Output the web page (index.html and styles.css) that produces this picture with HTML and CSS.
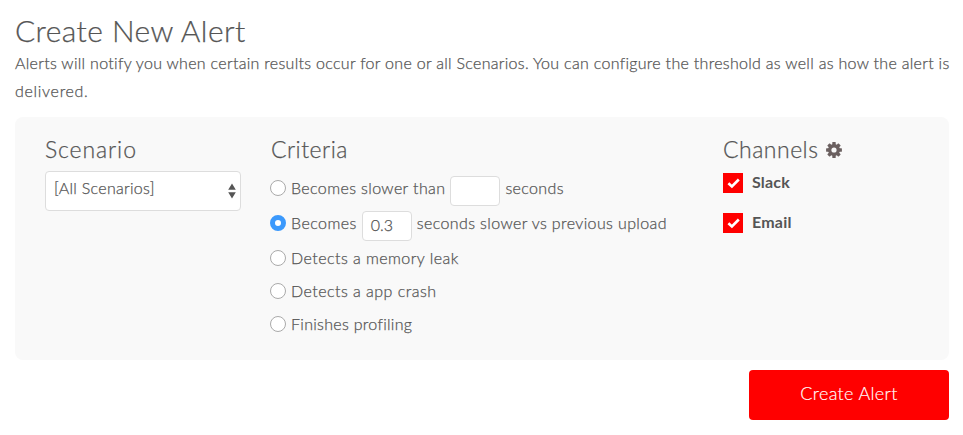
FILE: index.html
```html
<!DOCTYPE html>
<html lang="en">
<head>
<meta charset="utf-8">
<title>Create New Alert</title>
<link rel="stylesheet" href="styles.css">
</head>
<body>
<main class="page">
  <h1 class="title"><span>Create New Alert</span></h1>
  <p class="intro"><span class="intro-first">Alerts will notify you when certain results occur for one or all Scenarios. You can configure the threshold as well as how the alert is</span><br><span class="intro-last">delivered.</span></p>
  <form class="panel">
    <section class="scenario">
      <h2><span class="t-scenario">Scenario</span></h2>
      <div class="select"><span class="select-text">[All Scenarios]</span>
        <svg class="arrows" width="8" height="16" viewBox="0 0 8 16"><path d="M4 .5 7.8 6.7H.2zM4 15.5.2 9.3h7.6z" fill="#555"/></svg>
      </div>
    </section>
    <section class="criteria">
      <h2><span>Criteria</span></h2>
      <div class="option field"><i class="radio"></i><span class="t-slower">Becomes slower than</span><b class="input"></b><span class="t-seconds">seconds</span></div>
      <div class="option field"><i class="radio on"></i><span class="t-becomes">Becomes</span><b class="input">0.3</b><span class="t-upload">seconds slower vs previous upload</span></div>
      <div class="option"><i class="radio"></i><span class="t-leak">Detects a memory leak</span></div>
      <div class="option"><i class="radio"></i><span class="t-crash">Detects a app crash</span></div>
      <div class="option"><i class="radio"></i><span class="t-finish">Finishes profiling</span></div>
    </section>
    <section class="channels">
      <h2><span>Channels</span>
        <svg class="gear" width="16" height="16" viewBox="-8 -8 16 16"><g fill="#6b6060"><rect x="-1.7" y="-7.9" width="3.4" height="15.8" rx=".5"/><rect x="-1.7" y="-7.9" width="3.4" height="15.8" rx=".5" transform="rotate(45)"/><rect x="-1.7" y="-7.9" width="3.4" height="15.8" rx=".5" transform="rotate(90)"/><rect x="-1.7" y="-7.9" width="3.4" height="15.8" rx=".5" transform="rotate(135)"/><circle r="6"/></g><circle r="2.6" fill="#f9f9f9"/></svg>
      </h2>
      <div class="channel"><svg class="check" width="20" height="20" viewBox="0 0 20 20"><path d="M5.4 10.2 8.9 13.4 15.8 6.5" fill="none" stroke="#fff" stroke-width="2.6"/></svg><span class="t-slack">Slack</span></div>
      <div class="channel"><svg class="check" width="20" height="20" viewBox="0 0 20 20"><path d="M5.4 10.2 8.9 13.4 15.8 6.5" fill="none" stroke="#fff" stroke-width="2.6"/></svg><span class="t-email">Email</span></div>
    </section>
  </form>
  <button class="submit" type="button"><span>Create Alert</span></button>
</main>
</body>
</html>
```
FILE: styles.css
```css
* { box-sizing: border-box; }
body { margin: 0; background: #fff; color: #555; font: 300 16px/28px Lato, "Open Sans", sans-serif; -webkit-text-stroke: .25px currentColor; }
.page { display: flex; flex-direction: column; padding: 12px 14px 0 15px; white-space: nowrap; }
h1, h2, p { margin: 0; font-weight: 300; }
.title { height: 37px; font-size: 30px; line-height: 36px; letter-spacing: .43px; }
.intro { height: 68px; }
.intro-first { letter-spacing: .3px; }
.intro-last { letter-spacing: .7px; }
.panel { display: grid; grid-template-columns: 226px 452px 1fr; height: 243px; padding: 20px 30px 0; border-radius: 8px; background: #f9f9f9; }
h2 { display: flex; align-items: center; height: 26px; font-size: 23px; line-height: 26px; letter-spacing: .5px; }
h2 span { padding-bottom: 2px; }
.t-scenario { letter-spacing: .9px; }
.select { display: flex; justify-content: space-between; width: 196px; height: 40px; margin-top: 8px; padding: 2px 4px 0 8px; border: 1px solid #ddd; border-radius: 4px; background: #fff; }
.select-text { letter-spacing: .3px; }
.arrows { margin-top: 9px; }
.option { display: flex; align-items: center; height: 33px; margin-left: -1px; }
.option.field { height: 35px; }
.field { padding-bottom: 1px; }
h2 + .field { margin-top: 8px; }
.radio { flex: none; width: 16px; height: 16px; margin-right: 5px; border: 1px solid #aaa; border-radius: 50%; background: #fff; }
.radio.on { border: 5px solid #3b99fc; }
.t-slower, .t-seconds, .t-upload { letter-spacing: .38px; }
.t-becomes { letter-spacing: .45px; }
.t-leak { letter-spacing: .45px; }
.t-crash { letter-spacing: .47px; }
.t-finish { letter-spacing: .3px; }
.input { width: 50px; height: 30px; margin: 6px 5px 0; padding-left: 8px; border: 1px solid #ddd; border-radius: 4px; background: #fff; font-weight: 300; line-height: 26px; }
.gear { margin-left: 8px; }
.channel { display: flex; height: 20px; margin: 10px 0 20px; line-height: 17px; font-weight: 700; -webkit-text-stroke: 0; }
.check { margin-right: 9px; background: #f00; }
.t-slack, .t-email { letter-spacing: .2px; }
.submit { align-self: flex-end; width: 200px; height: 50px; margin-top: 10px; padding: 0 0 4px; border: 0; border-radius: 4px; background: #f00; color: #fff; font: 300 18px/28px Lato, sans-serif; letter-spacing: .33px; -webkit-text-stroke: .15px currentColor; }
```
